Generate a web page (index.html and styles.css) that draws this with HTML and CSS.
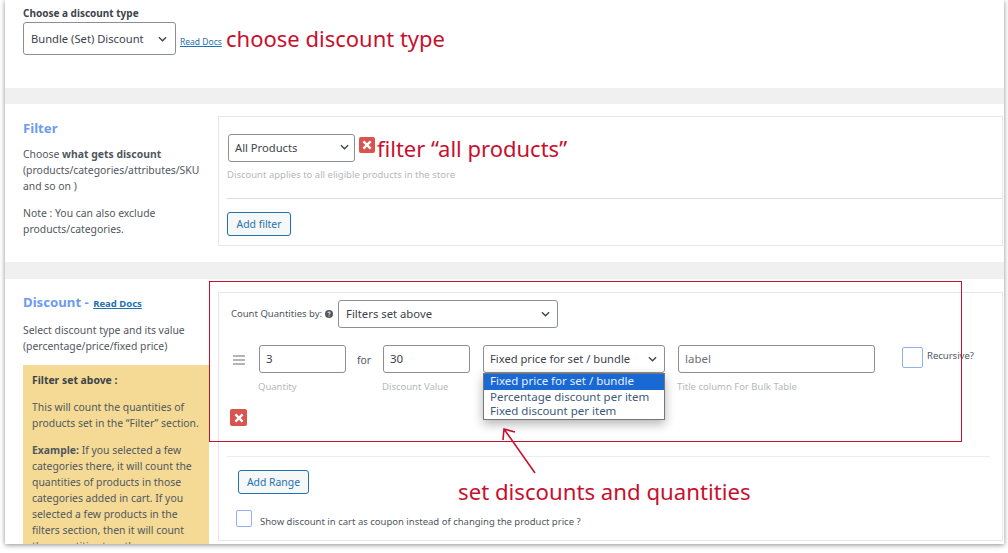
FILE: index.html
```html
<!DOCTYPE html>
<html lang="en">
<head>
	<meta charset="UTF-8">
	<title>Bundle discount rule</title>
	<link rel="stylesheet" href="styles.css">
</head>
<body>
	<div class="shot">
		<section class="type-row">
			<div class="type-label">Choose a discount type</div>
			<div class="type-controls">
				<div class="sel sel-type">Bundle (Set) Discount
					<svg class="chev" viewBox="0 0 10 6"><path d="M1 1l4 4 4-4"/></svg>
				</div>
				<a class="docs-small" href="#">Read Docs</a>
			</div>
		</section>

		<section class="block block-filter">
			<div class="side">
				<h2 class="side-title">Filter</h2>
				<p>Choose <b>what gets discount</b> (products/categories/attributes/SKU and so on )</p>
				<p>Note : You can also exclude products/categories.</p>
			</div>
			<div class="panel panel-filter">
				<div class="filter-row">
					<div class="sel sel-filter">All Products
						<svg class="chev" viewBox="0 0 10 6"><path d="M1 1l4 4 4-4"/></svg>
					</div>
					<div class="remove remove-filter"><svg viewBox="0 0 10 10"><path d="M2 2l6 6M8 2l-6 6"/></svg></div>
				</div>
				<div class="hint hint-filter">Discount applies to all eligible products in the store</div>
				<hr class="rule rule-filter">
				<button class="btn btn-filter">Add filter</button>
			</div>
		</section>

		<section class="block block-discount">
			<div class="side">
				<h2 class="side-title">Discount - <a class="docs" href="#">Read Docs</a></h2>
				<p>Select discount type and its value (percentage/price/fixed price)</p>
				<div class="note">
					<p><b>Filter set above :</b></p>
					<p>This will count the quantities of products set in the “Filter” section.</p>
					<p><b>Example:</b> If you selected a few categories there, it will count the quantities of products in those categories added in cart. If you selected a few products in the filters section, then it will count the quantities together.</p>
				</div>
			</div>
			<div class="panel panel-discount">
				<div class="count-row">
					<span class="count-label">Count Quantities by:</span>
					<svg class="help" viewBox="0 0 10 10"><circle cx="5" cy="5" r="4"/><path d="M3.9 4c0-1.4 2.3-1.4 2.3 0 0 .9-1.2.8-1.2 1.8M5 6.7v.9"/></svg>
					<div class="sel sel-count">Filters set above
						<svg class="chev" viewBox="0 0 10 6"><path d="M1 1l4 4 4-4"/></svg>
					</div>
				</div>
				<div class="range-row">
					<svg class="handle" viewBox="0 0 12 10"><path d="M0 1h12M0 5h12M0 9h12"/></svg>
					<div class="field field-qty">
						<div class="input">3</div>
						<div class="hint">Quantity</div>
					</div>
					<span class="for">for</span>
					<div class="field field-value">
						<div class="input">30</div>
						<div class="hint">Discount Value</div>
					</div>
					<div class="field field-kind">
						<div class="sel sel-kind">Fixed price for set / bundle
							<svg class="chev" viewBox="0 0 10 6"><path d="M1 1l4 4 4-4"/></svg>
						</div>
						<ul class="options">
							<li class="on">Fixed price for set / bundle</li>
							<li>Percentage discount per item</li>
							<li>Fixed discount per item</li>
						</ul>
					</div>
					<div class="field field-title">
						<div class="input input-label">label</div>
						<div class="hint">Title column For Bulk Table</div>
					</div>
					<label class="recursive"><span class="check check-big"></span>Recursive?</label>
				</div>
				<div class="remove remove-range"><svg viewBox="0 0 10 10"><path d="M2 2l6 6M8 2l-6 6"/></svg></div>
				<hr class="rule rule-discount">
				<button class="btn btn-range">Add Range</button>
				<label class="coupon"><span class="check"></span>Show discount in cart as coupon instead of changing the product price ?</label>
			</div>
		</section>

		<!-- annotations drawn on top of the screenshot -->
		<div class="mark mark-box"></div>
		<div class="mark mark-text mark-type">choose discount type</div>
		<div class="mark mark-text mark-filter">filter “all products”</div>
		<div class="mark mark-text mark-set">set discounts and quantities</div>
		<svg class="mark mark-arrow" viewBox="0 0 40 50"><path d="M35 47L4 3M3 14L4 3l11 3"/></svg>
	</div>
</body>
</html>
```

FILE: styles.css
```css
* {
	box-sizing: border-box;
}
html, body {
	margin: 0;
	height: 100%;
	background: #fff;
}
body {
	overflow: hidden;
	font-family: "Noto Sans", "Open Sans", sans-serif;
	font-size: 10.4px;
	color: #50575e;
}
.shot {
	position: relative;
	width: 999px;
	height: 544px;
	margin-left: 5px;
	background: #f0f0f1;
	box-shadow: 0 1px 5px rgba(0,0,0,.45);
	overflow: hidden;
}

/* top row */
.type-row {
	height: 88px;
	padding: 7px 18px 0;
	background: #fff;
}
.type-label {
	font-size: 10px;
	font-weight: 700;
	line-height: 13px;
	color: #3c434a;
}
.type-controls {
	display: flex;
	align-items: flex-end;
	margin-top: 2px;
}
.docs-small {
	margin: 0 0 8px 4px;
	font-size: 8.5px;
	line-height: 10px;
	color: #2271b1;
}

/* sections */
.block {
	display: flex;
	background: #fff;
}
.block-filter {
	height: 158px;
	margin-top: 16px;
	padding-top: 12px;
}
.block-discount {
	height: 265px;
	margin-top: 17px;
	padding-top: 13px;
}
.side {
	flex: none;
	width: 213px;
	padding-left: 18px;
	line-height: 16px;
}
.side p {
	margin: 0 0 11px;
	padding-right: 8px;
}
.side-title {
	margin: 4px 0 10px;
	font-size: 13.2px;
	line-height: 16px;
	font-weight: 700;
	color: #6d9bf1;
}
.docs {
	margin-left: 1px;
	font-size: 9.5px;
	color: #2271b1;
}
.block-discount .side {
	width: 204px;
	margin-right: 9px;
}
.block-discount .side-title {
	margin: 2px 0 10px;
}
.note {
	height: 240px;
	padding: 7px 0 0 9px;
	background: #f4da94;
}
.note p:first-child b {
	color: #3c434a;
}

.panel {
	flex: none;
	width: 785px;
	border: 1px solid #e6e7e8;
}
.panel-filter {
	height: 130px;
	padding: 17px 0 0 8px;
}
.panel-discount {
	height: 249px;
	padding: 7px 12px 0 8px;
}

/* form bits */
.sel {
	display: flex;
	align-items: center;
	justify-content: space-between;
	border: 1px solid #8c8f94;
	border-radius: 3px;
	background: #fff;
	color: #3c434a;
	font-size: 11.2px;
	white-space: nowrap;
}
.chev {
	width: 9px;
	height: 6px;
	fill: none;
	stroke: #3c434a;
	stroke-width: 1.5;
}
.sel-type {
	width: 153px;
	height: 33px;
	padding: 0 8px 0 7px;
}
.sel-filter {
	width: 127px;
	height: 28px;
	margin-left: 1px;
	padding: 0 5px 2px 6px;
}
.sel-count {
	width: 220px;
	height: 28px;
	padding: 0 7px 1px;
	font-size: 11.3px;
}
.sel-kind {
	width: 182px;
	height: 28px;
	padding: 0 7px 1px 6px;
}
.filter-row {
	display: flex;
	align-items: flex-start;
}
.remove {
	display: flex;
	align-items: center;
	justify-content: center;
	width: 17px;
	height: 17px;
	border-radius: 2px;
	background: #d9534f;
}
.remove svg {
	width: 12px;
	height: 12px;
	fill: none;
	stroke: #fff;
	stroke-width: 2;
}
.remove-filter {
	width: 16px;
	height: 16px;
	margin: 3px 0 0 4px;
}
.hint {
	margin: 8px 0 0 -1px;
	font-size: 9.5px;
	line-height: 12px;
	color: #b5b8bc;
	white-space: nowrap;
}
.hint-filter {
	margin: 7px 0 0;
}
.rule {
	margin: 0;
	border: 0;
	border-top: 1px solid #dcdde0;
}
.rule-filter {
	margin-top: 17px;
}
.rule-discount {
	margin-top: 30px;
	border-color: #eceded;
}
.btn {
	display: block;
	border: 1px solid #2271b1;
	border-radius: 3px;
	background: #f6f7f7;
	color: #2271b1;
	font: inherit;
	line-height: 14px;
}
.btn-filter {
	width: 64px;
	height: 24px;
	margin-top: 13px;
	padding: 0;
}
.btn-range {
	width: 71px;
	height: 24px;
	margin: 13px 0 0 11px;
	padding: 0;
}

.count-row {
	display: flex;
	align-items: center;
	margin-left: 4px;
}
.count-label {
	padding-bottom: 1px;
	font-size: 9.5px;
}
.help {
	width: 10px;
	height: 10px;
	margin: 0 4px 0 2px;
}
.help circle {
	fill: #50575e;
}
.help path {
	fill: none;
	stroke: #fff;
	stroke-width: 1;
}

.range-row {
	position: relative;
	display: flex;
	align-items: flex-start;
	height: 64px;
	margin-top: 17px;
}
.handle {
	flex: none;
	width: 12px;
	height: 10px;
	margin: 10px 0 0 6px;
	fill: none;
	stroke: #9a9da1;
	stroke-width: 1.3;
}
.field-qty {
	width: 87px;
	margin-left: 14px;
}
.for {
	width: 37px;
	padding: 8px 0 0 11px;
	line-height: 14px;
}
.field-value {
	width: 87px;
}
.field-kind {
	position: relative;
	width: 182px;
	margin-left: 13px;
}
.field-title {
	width: 197px;
	margin-left: 13px;
}
.input {
	height: 28px;
	padding: 0 6px;
	border: 1px solid #8c8f94;
	border-radius: 3px;
	background: #fff;
	color: #3c434a;
	font-size: 11.5px;
	line-height: 26px;
}
.input-label {
	color: #6b7177;
}
.options {
	position: absolute;
	top: 28px;
	left: 0;
	width: 182px;
	margin: 0;
	padding: 0 0 1px;
	list-style: none;
	border: 1px solid #767676;
	background: #fff;
	box-shadow: 0 4px 10px rgba(0,0,0,.3);
	color: #3c5a78;
	font-size: 11.5px;
	line-height: 14px;
	z-index: 2;
}
.options li {
	padding: 0 6px;
	white-space: nowrap;
}
.options .on {
	height: 16px;
	background: #1a68d3;
	color: #e8f0fb;
}
.recursive {
	display: flex;
	align-items: flex-start;
	margin: 2px 0 0 27px;
	font-size: 9.5px;
	line-height: 18px;
}
.check {
	flex: none;
	width: 16px;
	height: 17px;
	margin-right: 8px;
	border: 1px solid #8fb1ee;
	border-radius: 2px;
	background: #fff;
}
.check-big {
	width: 21px;
	height: 21px;
	margin-right: 4px;
}
.remove-range {
	margin: 0 0 0 3px;
}
.coupon {
	display: flex;
	align-items: flex-start;
	margin: 16px 0 0 9px;
	font-size: 9.5px;
	line-height: 23px;
}

/* red annotations */
.mark {
	position: absolute;
	z-index: 3;
}
.mark-box {
	left: 204px;
	top: 281px;
	width: 753px;
	height: 161px;
	border: 1px solid #c8102e;
}
.mark-text {
	color: #c8102e;
	font-size: 22px;
	line-height: 30px;
	white-space: nowrap;
}
.mark-type {
	left: 221px;
	top: 23px;
}
.mark-filter {
	left: 372px;
	top: 133px;
}
.mark-set {
	left: 453px;
	top: 477px;
	font-size: 22.2px;
}
.mark-arrow {
	left: 495px;
	top: 426px;
	width: 40px;
	height: 50px;
	fill: none;
	stroke: #c8102e;
	stroke-width: 1.6;
}
```
